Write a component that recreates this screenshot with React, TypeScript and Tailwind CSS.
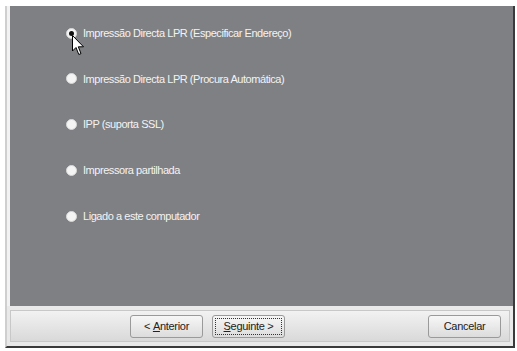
import React from 'react'

const options = [
  'Impressão Directa LPR (Especificar Endereço)',
  'Impressão Directa LPR (Procura Automática)',
  'IPP (suporta SSL)',
  'Impressora partilhada',
  'Ligado a este computador',
]

function Radio({ checked }: { checked?: boolean }) {
  return (
    <span className="w-[11px] h-[11px] rounded-full bg-[#f4f4f4] border border-[#d8d8d8] flex items-center justify-center shrink-0">
      {checked && <span className="w-[5px] h-[5px] rounded-full bg-[#111]" />}
    </span>
  )
}

function Cursor() {
  return (
    <svg className="absolute left-[6px] top-[8px]" width="13" height="21" viewBox="0 0 13 21">
      <path d="M0.5 0.5 L0.5 16 L4 12.5 L6.8 19.5 L9 18.6 L6.3 11.8 L11.5 11.8 Z" fill="#fff" stroke="#000" strokeWidth="1" />
    </svg>
  )
}

function Button({ children, focused }: { children: React.ReactNode; focused?: boolean }) {
  return (
    <button className="w-[73px] h-[23px] rounded-[3px] border border-[#9a9a9a] bg-gradient-to-b from-[#f7f7f7] to-[#dcdcdc] text-[11px] text-[#222] flex items-center justify-center p-[2px] tracking-[-0.3px]">
      <span className={`w-full h-full flex items-center justify-center whitespace-pre ${focused ? 'border border-dotted border-[#333]' : ''}`}>
        {children}
      </span>
    </button>
  )
}

export default function App() {
  return (
    <div className="w-[517px] h-[351px] bg-white pt-[6px] pl-[5px] pr-[2px] pb-[3px] flex" style={{ fontFamily: '"Liberation Sans", Arial, sans-serif' }}>
      <div className="flex-1 flex flex-col border-l-[2px] border-[#cfcfcf] border-r-[2px] border-r-[#3a3a3a] border-b-[2px] border-b-[#3a3a3a]">
        <div className="flex-1 flex">
          <div className="w-[3px] bg-[#f2f2f2]" />
          <div className="flex-1 bg-[#7f8083] pl-[56px] pt-[21px] flex flex-col gap-[33.75px]">
            {options.map((label, i) => (
              <div key={label} className="relative flex items-center gap-[6px] h-[12px] text-[11px] text-[#f3f3f3] tracking-[-0.45px]">
                <Radio checked={i === 0} />
                <span>{label}</span>
                {i === 0 && <Cursor />}
              </div>
            ))}
          </div>
        </div>
        <div className="h-[40px] bg-[#e9e9e9] px-[3px] py-[4px] flex">
          <div className="flex-1 border border-[#c8c8c8] bg-gradient-to-b from-[#f2f2f2] to-[#d9d9d9] flex items-center pl-[119px] pr-[8px]">
            <Button>{'< '}<u>A</u>nterior</Button>
            <div className="w-[9px]" />
            <Button focused><u>S</u>{'eguinte >'}</Button>
            <div className="flex-1" />
            <Button>Cancelar</Button>
          </div>
        </div>
      </div>
    </div>
  )
}
